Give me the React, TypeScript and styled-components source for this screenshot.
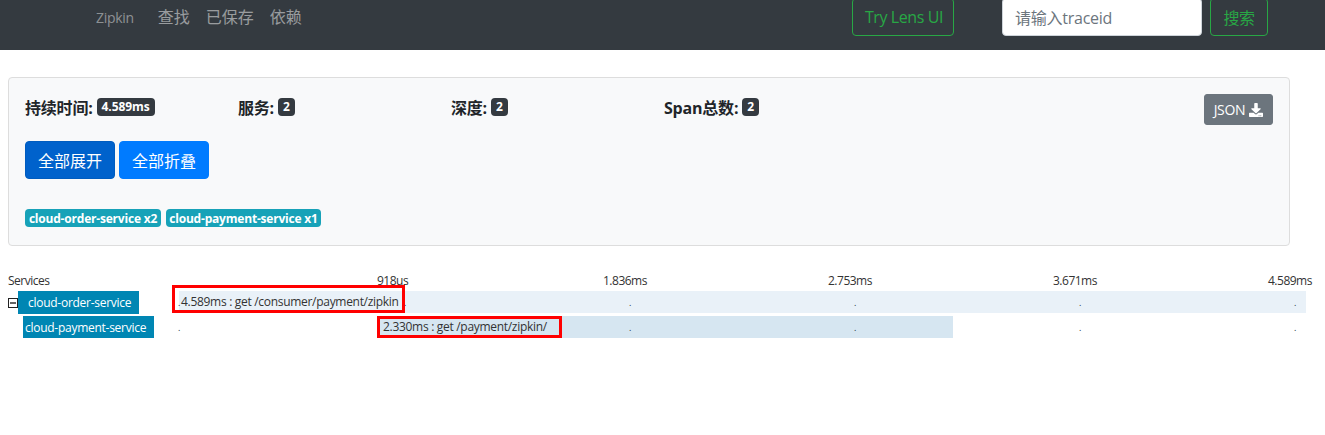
import React from 'react';
import styled, { createGlobalStyle } from 'styled-components';
import { FaDownload } from 'react-icons/fa';

const GlobalStyle = createGlobalStyle`
  body {
    margin: 0;
    background: #fff;
    color: #212529;
    font-family: "Open Sans", "Noto Sans CJK SC", sans-serif;
    font-size: 16px;
  }
`;

const Navbar = styled.nav`
  height: 50px;
  background-color: #343a40;
  overflow: hidden;
  padding: 0 57px 0 96px;
`;

const NavInner = styled.div`
  display: flex;
  align-items: center;
  height: 38px;
  margin-top: -2px;
`;

const Brand = styled.span`
  font-size: 14px;
  letter-spacing: -0.3px;
  color: rgba(255, 255, 255, 0.45);
  margin-right: 24px;
`;

const NavLink = styled.span`
  color: rgba(255, 255, 255, 0.5);
  margin-right: 16px;
  line-height: 38px;
  height: 38px;
`;

const OutlineButton = styled.button<{ $width: number; $gap?: number }>`
  box-sizing: border-box;
  width: ${(p) => p.$width}px;
  height: 38px;
  margin-left: ${(p) => p.$gap ?? 0}px;
  padding: 0;
  background: transparent;
  border: 1px solid #28a745;
  border-radius: 4px;
  color: #28a745;
  font: inherit;
  font-size: 16px;
  letter-spacing: -0.4px;
`;

const LensButton = styled(OutlineButton)`
  margin-left: auto;
  padding-left: 2px;
`;

const SearchInput = styled.input`
  box-sizing: border-box;
  width: 200px;
  height: 38px;
  margin-left: 48px;
  padding: 2px 12px 0;
  background: #fff;
  border: 1px solid #ced4da;
  border-radius: 4px;
  font: inherit;
  font-size: 16px;
  letter-spacing: -0.25px;

  &::placeholder {
    color: #6c757d;
    opacity: 1;
  }
`;

const Panel = styled.section`
  box-sizing: border-box;
  width: 1282px;
  height: 169px;
  margin: 27px 0 0 8px;
  padding: 16px;
  background-color: #f8f9fa;
  border: 1px solid #ddd;
  border-radius: 4px;
`;

const SummaryRow = styled.div`
  display: flex;
  align-items: center;
  height: 31px;
`;

const Stat = styled.div`
  display: flex;
  align-items: center;
  gap: 4px;
  width: 213px;
  margin-top: -6px;
  font-weight: 700;
  font-size: 16px;
  letter-spacing: -0.2px;
`;

const DarkBadge = styled.span`
  padding: 2px 5px;
  background-color: #343a40;
  border-radius: 4px;
  color: #fff;
  font-size: 12px;
  line-height: 14px;
  font-weight: 700;
  letter-spacing: -0.1px;
`;

const JsonButton = styled.button`
  display: flex;
  align-items: center;
  justify-content: center;
  gap: 4px;
  box-sizing: border-box;
  width: 69px;
  height: 31px;
  margin-left: auto;
  padding: 0;
  background-color: #6c757d;
  border: 1px solid #6c757d;
  border-radius: 3px;
  color: #fff;
  font: inherit;
  font-size: 14px;
  letter-spacing: -0.3px;
`;

const ButtonRow = styled.div`
  display: flex;
  gap: 4px;
  margin-top: 16px;
`;

const PrimaryButton = styled.button<{ $active?: boolean }>`
  box-sizing: border-box;
  width: 90px;
  height: 38px;
  padding: 0;
  background-color: ${(p) => (p.$active ? '#0062cc' : '#007bff')};
  border: 1px solid ${(p) => (p.$active ? '#005cbf' : '#007bff')};
  border-radius: 4px;
  color: #fff;
  font: inherit;
  font-size: 16px;
`;

const ServiceBadges = styled.div`
  display: flex;
  gap: 5px;
  margin-top: 30px;
`;

const ServiceBadge = styled.span<{ $width: number }>`
  box-sizing: border-box;
  width: ${(p) => p.$width}px;
  height: 18px;
  background-color: #17a2b8;
  border-radius: 4px;
  color: #fff;
  font-size: 12px;
  line-height: 19px;
  font-weight: 700;
  text-align: center;
  white-space: nowrap;
  letter-spacing: -0.2px;
`;

const Timeline = styled.div`
  margin: 27px 0 0 8px;
  font-size: 12px;
  color: #333;
`;

const ScaleRow = styled.div`
  display: grid;
  grid-template-columns: 369px 226px 225px 225px 215px 1fr;
  height: 16px;
  line-height: 16px;
  letter-spacing: -0.5px;
`;

const Row = styled.div<{ $top: number }>`
  display: flex;
  height: 22px;
  margin-top: ${(p) => p.$top}px;
`;

const NameCell = styled.div<{ $indent: number }>`
  display: flex;
  align-items: flex-start;
  flex: 0 0 171px;
  padding-left: ${(p) => p.$indent}px;
  box-sizing: border-box;
`;

const ToggleIcon = styled.svg`
  flex: 0 0 10px;
  width: 10px;
  height: 10px;
  margin-top: 7px;
`;

const ServiceLabel = styled.span<{ $width: number; $pad: number }>`
  box-sizing: border-box;
  width: ${(p) => p.$width}px;
  height: 23px;
  padding-left: ${(p) => p.$pad}px;
  background-color: #0086b3;
  color: #fff;
  line-height: 23px;
  letter-spacing: -0.27px;
  white-space: nowrap;
`;

const Track = styled.div`
  position: relative;
  flex: 0 0 1127px;
`;

const SpanBar = styled.div<{ $color: string; $pad: number }>`
  box-sizing: border-box;
  height: 22px;
  padding-left: ${(p) => p.$pad}px;
  background-color: ${(p) => p.$color};
  line-height: 22px;
  letter-spacing: -0.3px;
  white-space: nowrap;
`;

const TickDot = styled.span`
  position: absolute;
  top: 5px;
  margin-left: -1px;
  font-size: 9px;
  line-height: 14px;
  color: #234;
`;

const Highlight = styled.div`
  position: absolute;
  box-sizing: border-box;
  border: 3px solid #f00;
  pointer-events: none;
`;

const TOTAL = 1127;

const spans = [
  {
    service: 'cloud-order-service',
    indent: 0,
    labelWidth: 121,
    labelPad: 10,
    start: 0,
    width: 1127,
    color: '#e9f1f8',
    pad: 2,
    text: '4.589ms : get /consumer/payment/zipkin',
    top: 2,
    toggle: true,
    ticks: [0, 226, 451, 676, 901, 1116],
  },
  {
    service: 'cloud-payment-service',
    indent: 15,
    labelWidth: 131,
    labelPad: 2,
    start: 199,
    width: 575,
    color: '#d6e6f1',
    pad: 5,
    text: '2.330ms : get /payment/zipkin/',
    top: 3,
    toggle: false,
    ticks: [0, 451, 676, 901, 1116],
  },
];

const App = () => {
  return (
    <>
      <GlobalStyle />
      <Navbar>
        <NavInner>
          <Brand>Zipkin</Brand>
          <NavLink>查找</NavLink>
          <NavLink>已保存</NavLink>
          <NavLink>依赖</NavLink>
          <LensButton $width={102}>Try Lens UI</LensButton>
          <SearchInput placeholder="请输入traceid" />
          <OutlineButton $width={58} $gap={8}>搜索</OutlineButton>
        </NavInner>
      </Navbar>

      <Panel>
        <SummaryRow>
          <Stat>持续时间: <DarkBadge>4.589ms</DarkBadge></Stat>
          <Stat>服务: <DarkBadge>2</DarkBadge></Stat>
          <Stat>深度: <DarkBadge>2</DarkBadge></Stat>
          <Stat>Span总数: <DarkBadge>2</DarkBadge></Stat>
          <JsonButton>JSON <FaDownload size={14} /></JsonButton>
        </SummaryRow>
        <ButtonRow>
          <PrimaryButton $active>全部展开</PrimaryButton>
          <PrimaryButton>全部折叠</PrimaryButton>
        </ButtonRow>
        <ServiceBadges>
          <ServiceBadge $width={136}>cloud-order-service x2</ServiceBadge>
          <ServiceBadge $width={155}>cloud-payment-service x1</ServiceBadge>
        </ServiceBadges>
      </Panel>

      <Timeline>
        <ScaleRow>
          <span>Services</span>
          <span>918us</span>
          <span>1.836ms</span>
          <span>2.753ms</span>
          <span>3.671ms</span>
          <span>4.589ms</span>
        </ScaleRow>
        {spans.map((span) => (
          <Row key={span.service} $top={span.top}>
            <NameCell $indent={span.indent}>
              {span.toggle && (
                <ToggleIcon viewBox="0 0 10 10">
                  <rect x="0.5" y="0.5" width="9" height="9" fill="none" stroke="#222" />
                  <path d="M2 5h6" stroke="#222" strokeWidth="1.4" />
                </ToggleIcon>
              )}
              <ServiceLabel $width={span.labelWidth} $pad={span.labelPad}>{span.service}</ServiceLabel>
            </NameCell>
            <Track>
              <SpanBar
                $color={span.color}
                $pad={span.pad}
                style={{ marginLeft: `${(span.start / TOTAL) * 100}%`, width: `${(span.width / TOTAL) * 100}%` }}
              >
                {span.text}
              </SpanBar>
              {span.ticks.map((tick) => (
                <TickDot key={tick} style={{ left: `${(tick / TOTAL) * 100}%` }}>.</TickDot>
              ))}
            </Track>
          </Row>
        ))}
        <Highlight style={{ left: 172, top: 285, width: 233, height: 28 }} />
        <Highlight style={{ left: 377, top: 316, width: 185, height: 22 }} />
      </Timeline>
    </>
  );
};

export default App;
